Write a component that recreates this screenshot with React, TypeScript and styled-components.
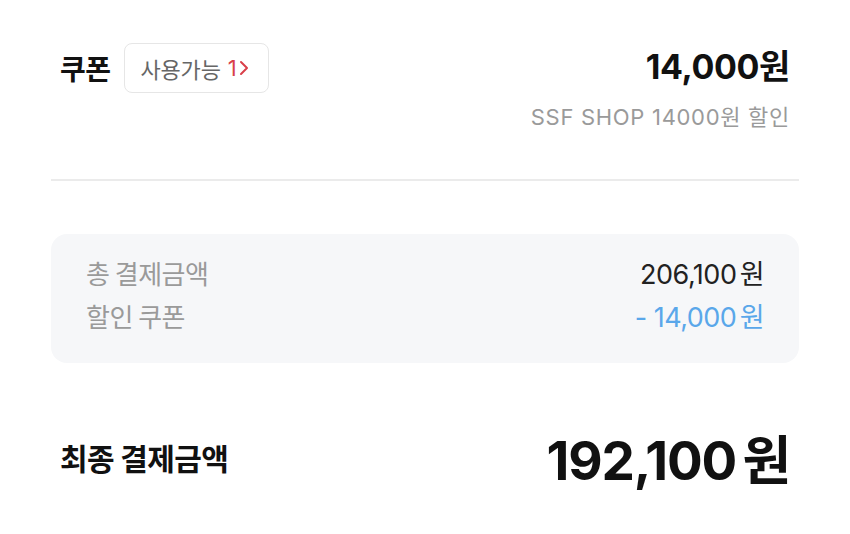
import React from 'react';
import styled, { createGlobalStyle } from 'styled-components';

const GlobalStyle = createGlobalStyle`
  html, body {
    margin: 0;
    padding: 0;
    background: #ffffff;
    font-family: Inter, "Noto Sans CJK KR", sans-serif;
  }
`;

interface SummaryLine {
  label: string;
  value: string;
  tone: 'plain' | 'discount';
}

const lines: SummaryLine[] = [
  { label: '총 결제금액', value: '206,100', tone: 'plain' },
  { label: '할인 쿠폰', value: '- 14,000', tone: 'discount' },
];

export default function App() {
  return (
    <>
      <GlobalStyle />
      <StyledPage>
        <StyledCouponRow>
          <StyledCouponLeft>
            <StyledTitle>쿠폰</StyledTitle>
            <StyledAvailable>
              사용가능 <StyledCount>1</StyledCount>
              <StyledChevron viewBox="0 0 10 16" aria-hidden>
                <path d="M2 2l6 6-6 6" />
              </StyledChevron>
            </StyledAvailable>
          </StyledCouponLeft>
          <StyledCouponRight>
            <StyledCouponAmount>14,000원</StyledCouponAmount>
            <StyledCouponDesc>SSF SHOP 14000원 할인</StyledCouponDesc>
          </StyledCouponRight>
        </StyledCouponRow>

        <StyledDivider />

        <StyledSummary>
          {lines.map((line) => (
            <StyledSummaryRow key={line.label}>
              <StyledSummaryLabel>{line.label}</StyledSummaryLabel>
              <StyledSummaryValue $tone={line.tone}>
                {line.value}
                <StyledWon>원</StyledWon>
              </StyledSummaryValue>
            </StyledSummaryRow>
          ))}
        </StyledSummary>

        <StyledTotalRow>
          <StyledTotalLabel>최종 결제금액</StyledTotalLabel>
          <StyledTotalValue>
            192,100<StyledWon>원</StyledWon>
          </StyledTotalValue>
        </StyledTotalRow>
      </StyledPage>
    </>
  );
}

const StyledPage = styled.div`
  width: 850px;
  height: 534px;
  box-sizing: border-box;
  padding: 43px 51px 0;
  display: flex;
  flex-direction: column;
`;

const StyledCouponRow = styled.div`
  display: flex;
  justify-content: space-between;
  align-items: flex-start;
  padding: 0 9px;
`;

const StyledCouponLeft = styled.div`
  display: flex;
  align-items: center;
  gap: 13px;
`;

const StyledTitle = styled.span`
  font-family: "Noto Sans CJK KR", sans-serif;
  font-size: 28px;
  font-weight: 700;
  color: #111;
  letter-spacing: -0.5px;
`;

const StyledAvailable = styled.button`
  display: flex;
  align-items: center;
  height: 50px;
  box-sizing: border-box;
  padding: 0 19px 0 16px;
  background: #fff;
  border: 1.5px solid #e6e6e6;
  border-radius: 8px;
  font-family: inherit;
  font-size: 22px;
  color: #666;
  letter-spacing: -0.2px;
  white-space: pre;
`;

const StyledCount = styled.span`
  color: #d9404a;
  margin-left: 1px;
`;

const StyledChevron = styled.svg`
  width: 10px;
  height: 16px;
  margin-left: 3px;
  fill: none;
  stroke: #d9404a;
  stroke-width: 2;
  stroke-linecap: round;
  stroke-linejoin: round;
`;

const StyledCouponRight = styled.div`
  display: flex;
  flex-direction: column;
  align-items: flex-end;
`;

const StyledCouponAmount = styled.span`
  font-size: 34px;
  font-weight: 700;
  color: #111;
  line-height: 48px;
  letter-spacing: -0.4px;
`;

const StyledCouponDesc = styled.span`
  margin-top: 8px;
  font-size: 22px;
  color: #9a9a9a;
  letter-spacing: 0.7px;
`;

const StyledDivider = styled.hr`
  margin: 48px 0 0;
  border: 0;
  height: 2px;
  background: #ebebeb;
`;

const StyledSummary = styled.div`
  margin-top: 53px;
  background: #f6f7f9;
  border-radius: 16px;
  padding: 20px 35px 29px;
  display: flex;
  flex-direction: column;
  gap: 6px;
`;

const StyledSummaryRow = styled.div`
  display: flex;
  justify-content: space-between;
  align-items: center;
  height: 37px;
`;

const StyledSummaryLabel = styled.span`
  font-family: "Noto Sans CJK KR", sans-serif;
  font-size: 26px;
  color: #9a9a9a;
  letter-spacing: -0.5px;
`;

const StyledSummaryValue = styled.span<{ $tone: 'plain' | 'discount' }>`
  font-size: 27px;
  color: ${(p) => (p.$tone === 'discount' ? '#5aa7ea' : '#222')};
  letter-spacing: -0.5px;
`;

const StyledWon = styled.span`
  font-family: "Noto Sans CJK KR", sans-serif;
  margin-left: 0.12em;
`;

const StyledTotalRow = styled.div`
  margin-top: 56px;
  display: flex;
  justify-content: space-between;
  align-items: center;
  padding: 0 9px;
`;

const StyledTotalLabel = styled.span`
  font-family: "Noto Sans CJK KR", sans-serif;
  font-size: 30px;
  font-weight: 700;
  color: #111;
  letter-spacing: -0.6px;
`;

const StyledTotalValue = styled.span`
  font-size: 53px;
  font-weight: 700;
  color: #111;
  letter-spacing: -1.2px;
`;
